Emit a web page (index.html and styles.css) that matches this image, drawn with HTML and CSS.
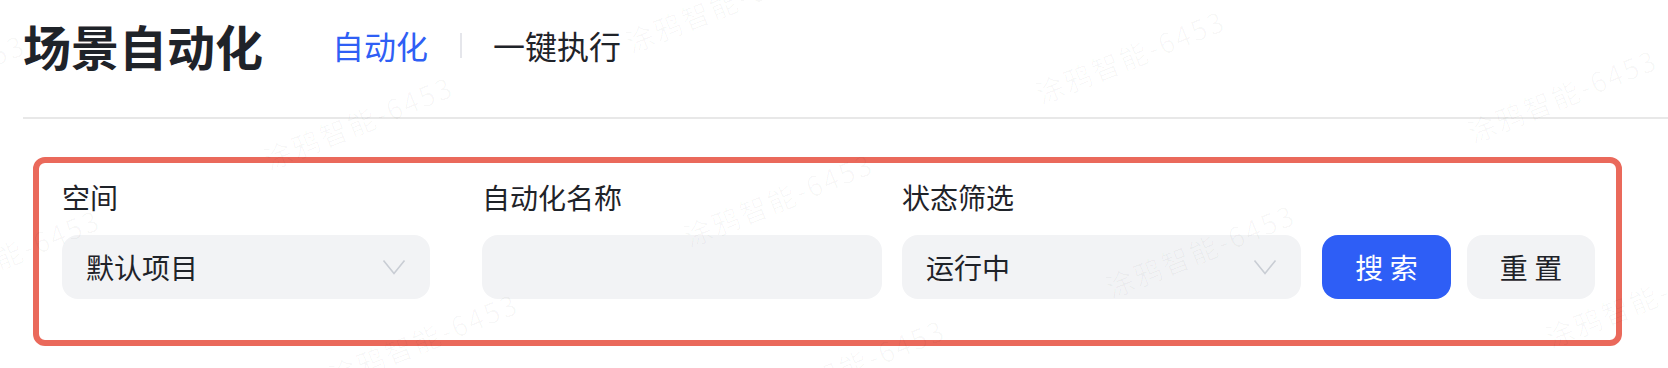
FILE: index.html
```html
<!DOCTYPE html>
<html lang="zh-CN">
<head>
<meta charset="utf-8">
<title>场景自动化</title>
<link rel="stylesheet" href="styles.css">
</head>
<body>
<div class="page">
  <header class="header">
    <h1 class="title">场景自动化</h1>
    <nav class="tabs">
      <a class="tab tab-active">自动化</a>
      <span class="tab-sep"></span>
      <a class="tab">一键执行</a>
    </nav>
  </header>

  <section class="filter">
    <div class="field field-space">
      <label class="field-label">空间</label>
      <div class="control select">
        <span class="select-value">默认项目</span>
        <svg class="chevron" viewBox="0 0 24 16" width="24" height="16"><path d="M1.5 1.5 L12 14.5 L22.5 1.5"/></svg>
      </div>
    </div>
    <div class="field field-name">
      <label class="field-label">自动化名称</label>
      <div class="control input"></div>
    </div>
    <div class="field field-status">
      <label class="field-label">状态筛选</label>
      <div class="control select">
        <span class="select-value">运行中</span>
        <svg class="chevron" viewBox="0 0 24 16" width="24" height="16"><path d="M1.5 1.5 L12 14.5 L22.5 1.5"/></svg>
      </div>
    </div>
    <div class="actions">
      <button class="btn btn-primary">搜 索</button>
      <button class="btn btn-default">重 置</button>
    </div>
  </section>
</div>

<div class="watermarks">
  <span class="wm wm-1">涂鸦智能-6453</span>
  <span class="wm wm-2">涂鸦智能-6453</span>
  <span class="wm wm-3">涂鸦智能-6453</span>
  <span class="wm wm-4">涂鸦智能-6453</span>
  <span class="wm wm-5">涂鸦智能-6453</span>
  <span class="wm wm-6">涂鸦智能-6453</span>
  <span class="wm wm-7">涂鸦智能-6453</span>
  <span class="wm wm-8">涂鸦智能-6453</span>
  <span class="wm wm-9">涂鸦智能-6453</span>
  <span class="wm wm-10">涂鸦智能-6453</span>
  <span class="wm wm-11">涂鸦智能-6453</span>
</div>
</body>
</html>
```

FILE: styles.css
```css
* {
  box-sizing: border-box;
  margin: 0;
  padding: 0;
}

html,
body {
  width: 100%;
  height: 100%;
  overflow: hidden;
  background: #ffffff;
}

body {
  position: relative;
  font-family: "Noto Sans CJK SC", "Noto Sans", sans-serif;
  color: #1f2329;
}

.page {
  padding-left: 23px;
}

/* Header */
.header {
  display: flex;
  align-items: center;
  height: 119px;
  padding-bottom: 27px;
  border-bottom: 2px solid #e8e8e8;
}

.title {
  font-size: 48px;
  line-height: 48px;
  font-weight: 700;
  color: #1f2329;
}

.tabs {
  display: flex;
  align-items: center;
  margin-left: 69px;
}

.tab {
  font-size: 32px;
  line-height: 32px;
  color: #1f2329;
}

.tab-active {
  color: #2f5ff5;
}

.tab-sep {
  width: 2px;
  height: 25px;
  margin: 0 31px 0 32px;
  background: #e5e6eb;
}

/* Filter panel */
.filter {
  display: flex;
  align-items: flex-end;
  width: 1589px;
  height: 189px;
  margin: 38px 0 0 10px;
  padding: 20px 21px 41px 23px;
  border: 6px solid #ea695b;
  border-radius: 12px;
}

.field {
  display: flex;
  flex-direction: column;
  gap: 24px;
}

.field-space {
  width: 368px;
  margin-right: 52px;
}

.field-name {
  width: 400px;
  margin-right: 20px;
}

.field-status {
  width: 399px;
}

.field-label {
  font-size: 28px;
  line-height: 28px;
  color: #1f2329;
}

.control {
  display: flex;
  align-items: center;
  justify-content: space-between;
  height: 64px;
  padding: 0 24px;
  background: #f2f3f5;
  border-radius: 16px;
  font-size: 28px;
  line-height: 28px;
  color: #1f2329;
}

.chevron {
  flex: none;
  fill: none;
  stroke: #c9cdd4;
  stroke-width: 1.6;
}

.actions {
  display: flex;
  gap: 16px;
  margin-left: 21px;
}

.btn {
  height: 64px;
  border: none;
  border-radius: 16px;
  font-family: inherit;
  font-size: 28px;
  line-height: 28px;
}

.btn-primary {
  width: 129px;
  background: #2e5ef6;
  color: #ffffff;
}

.btn-default {
  width: 128px;
  background: #f2f3f5;
  color: #1f2329;
}

/* Watermarks */
.watermarks {
  position: absolute;
  top: 0;
  left: 0;
  right: 0;
  bottom: 0;
  overflow: hidden;
  pointer-events: none;
}

.wm {
  position: absolute;
  font-size: 28px;
  line-height: 28px;
  letter-spacing: 2px;
  white-space: nowrap;
  color: rgba(0, 0, 0, 0.028);
  transform: translate(-50%, -50%) rotate(-22deg);
}

.wm-1 { left: -70px; top: 80px; }
.wm-2 { left: 358px; top: 122px; }
.wm-3 { left: 778px; top: 199px; }
.wm-4 { left: 1130px; top: 56px; }
.wm-5 { left: 1562px; top: 95px; }
.wm-6 { left: 5px; top: 255px; }
.wm-7 { left: 423px; top: 339px; }
.wm-8 { left: 850px; top: 365px; }
.wm-9 { left: 1200px; top: 250px; }
.wm-10 { left: 1640px; top: 300px; }
.wm-11 { left: 720px; top: 5px; }
```
